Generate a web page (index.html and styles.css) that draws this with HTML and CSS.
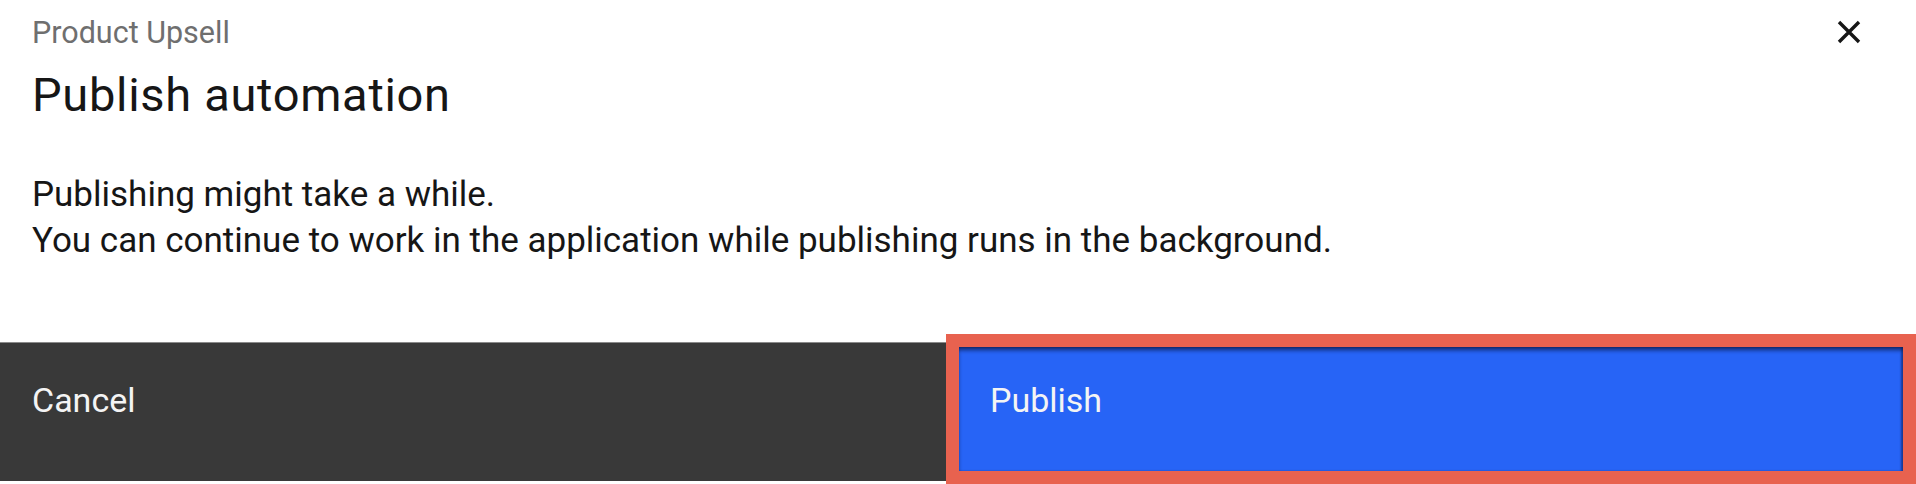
FILE: index.html
```html
<!DOCTYPE html>
<html lang="en">
<head>
<meta charset="utf-8">
<title>Publish automation</title>
<link rel="stylesheet" href="styles.css">
</head>
<body>
<div class="modal">
  <header class="modal-header">
    <p class="modal-label">Product Upsell</p>
    <h2 class="modal-title">Publish automation</h2>
    <button class="modal-close" aria-label="Close">
      <svg viewBox="0 0 24 24" width="24" height="24"><path d="M2 2 L22 22 M22 2 L2 22" stroke="#161616" stroke-width="3.4" fill="none"/></svg>
    </button>
  </header>
  <div class="modal-content">
    <p>Publishing might take a while.</p>
    <p>You can continue to work in the application while publishing runs in the background.</p>
  </div>
  <footer class="modal-footer">
    <button class="btn btn-secondary">Cancel</button>
    <button class="btn btn-primary">Publish</button>
  </footer>
  <div class="highlight"></div>
</div>
</body>
</html>
```

FILE: styles.css
```css
html, body {
  margin: 0;
  padding: 0;
  background: #ffffff;
}
body {
  width: 1916px;
  height: 484px;
  overflow: hidden;
  font-family: Roboto, "Noto Sans", sans-serif;
  color: #161616;
}
.modal {
  position: relative;
  height: 484px;
  display: flex;
  flex-direction: column;
}
.modal-header {
  padding: 15px 32px 0 32px;
}
.modal-label {
  margin: 0;
  font-size: 30.5px;
  line-height: 36px;
  color: #6f6f6f;
}
.modal-title {
  margin: 16px 0 0 0;
  font-size: 47px;
  line-height: 56px;
  font-weight: 400;
  letter-spacing: 0.7px;
  color: #161616;
}
.modal-close {
  position: absolute;
  top: 20px;
  right: 55px;
  width: 24px;
  height: 24px;
  padding: 0;
  border: 0;
  background: none;
}
.modal-close svg {
  display: block;
}
.modal-content {
  padding: 49px 32px 0 32px;
}
.modal-content p {
  margin: 0;
  font-size: 35px;
  line-height: 46px;
  color: #161616;
}
.modal-footer {
  margin-top: auto;
  margin-bottom: 3px;
  display: grid;
  grid-template-columns: 1fr 1fr;
  height: 138px;
  border-top: 1px solid #8a8a8a;
  background: #393939;
}
.btn {
  border: 0;
  margin: 0;
  padding: 37px 32px 0 32px;
  text-align: left;
  font-family: inherit;
  font-size: 34px;
  line-height: 40px;
  color: #f4f4f4;
  display: flex;
  align-items: flex-start;
}
.btn-secondary {
  background: #393939;
}
.btn-primary {
  background: #2764f6;
}
.highlight {
  position: absolute;
  left: 946px;
  top: 334px;
  width: 944px;
  height: 124px;
  border: 13px solid #e8624f;
  box-shadow: inset 0 4px 4px -1px rgba(10, 20, 60, 0.75), inset -2px 0 2px rgba(10, 20, 60, 0.4);
}
```
